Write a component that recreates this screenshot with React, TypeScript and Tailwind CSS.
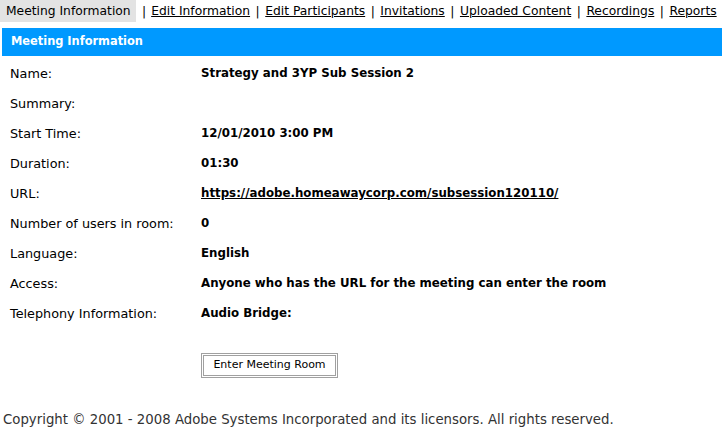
import React from "react";

const tabs = ["Edit Information", "Edit Participants", "Invitations", "Uploaded Content", "Recordings", "Reports"];

const rows: [string, React.ReactNode][] = [
  ["Name:", "Strategy and 3YP Sub Session 2"],
  ["Summary:", ""],
  ["Start Time:", "12/01/2010 3:00 PM"],
  ["Duration:", "01:30"],
  ["URL:", <a className="underline" href="#">https://adobe.homeawaycorp.com/subsession120110/</a>],
  ["Number of users in room:", "0"],
  ["Language:", "English"],
  ["Access:", "Anyone who has the URL for the meeting can enter the room"],
  ["Telephony Information:", "Audio Bridge:"],
];

export default function App() {
  return (
    <div className="w-[724px] h-[431px] bg-white text-black overflow-hidden" style={{ fontFamily: "'DejaVu Sans', Verdana, sans-serif" }}>
      <div className="flex items-center h-[22px] text-[12.3px] whitespace-nowrap">
        <div className="bg-[#e3e3e3] h-[22px] w-[136px] flex items-center pl-[6px]">Meeting Information</div>
        <span className="pl-[6px] pr-[5px]">|</span>
        {tabs.map((t, i) => (
          <React.Fragment key={t}>
            {i > 0 && <span className="px-[5.5px]">|</span>}
            <a href="#" className="underline">{t}</a>
          </React.Fragment>
        ))}
      </div>
      <div className="mt-[6px] mx-[2px] h-[28px] bg-[#0099ff] text-white font-bold text-[11.4px] flex items-center pl-[9px]">
        Meeting Information
      </div>
      <div className="pt-[3px]">
        {rows.map(([l, v]) => (
          <div key={l} className="flex h-[30px] items-center">
            <div className="w-[201px] pl-[10px] text-[12.8px]">{l}</div>
            <div className="font-bold text-[11.8px]">{v}</div>
          </div>
        ))}
      </div>
      <div className="pl-[201px] pt-[22px]">
        <button className="w-[137px] h-[25px] border border-[#a0a0a0] bg-white p-[1px]">
          <div className="w-full h-full border border-[#a0a0a0] flex items-center justify-center text-[11px]">Enter Meeting Room</div>
        </button>
      </div>
      <div className="pl-[3px] pt-[32px] text-[13.3px] text-[#333]">
        Copyright © 2001 - 2008 Adobe Systems Incorporated and its licensors. All rights reserved.
      </div>
    </div>
  );
}
